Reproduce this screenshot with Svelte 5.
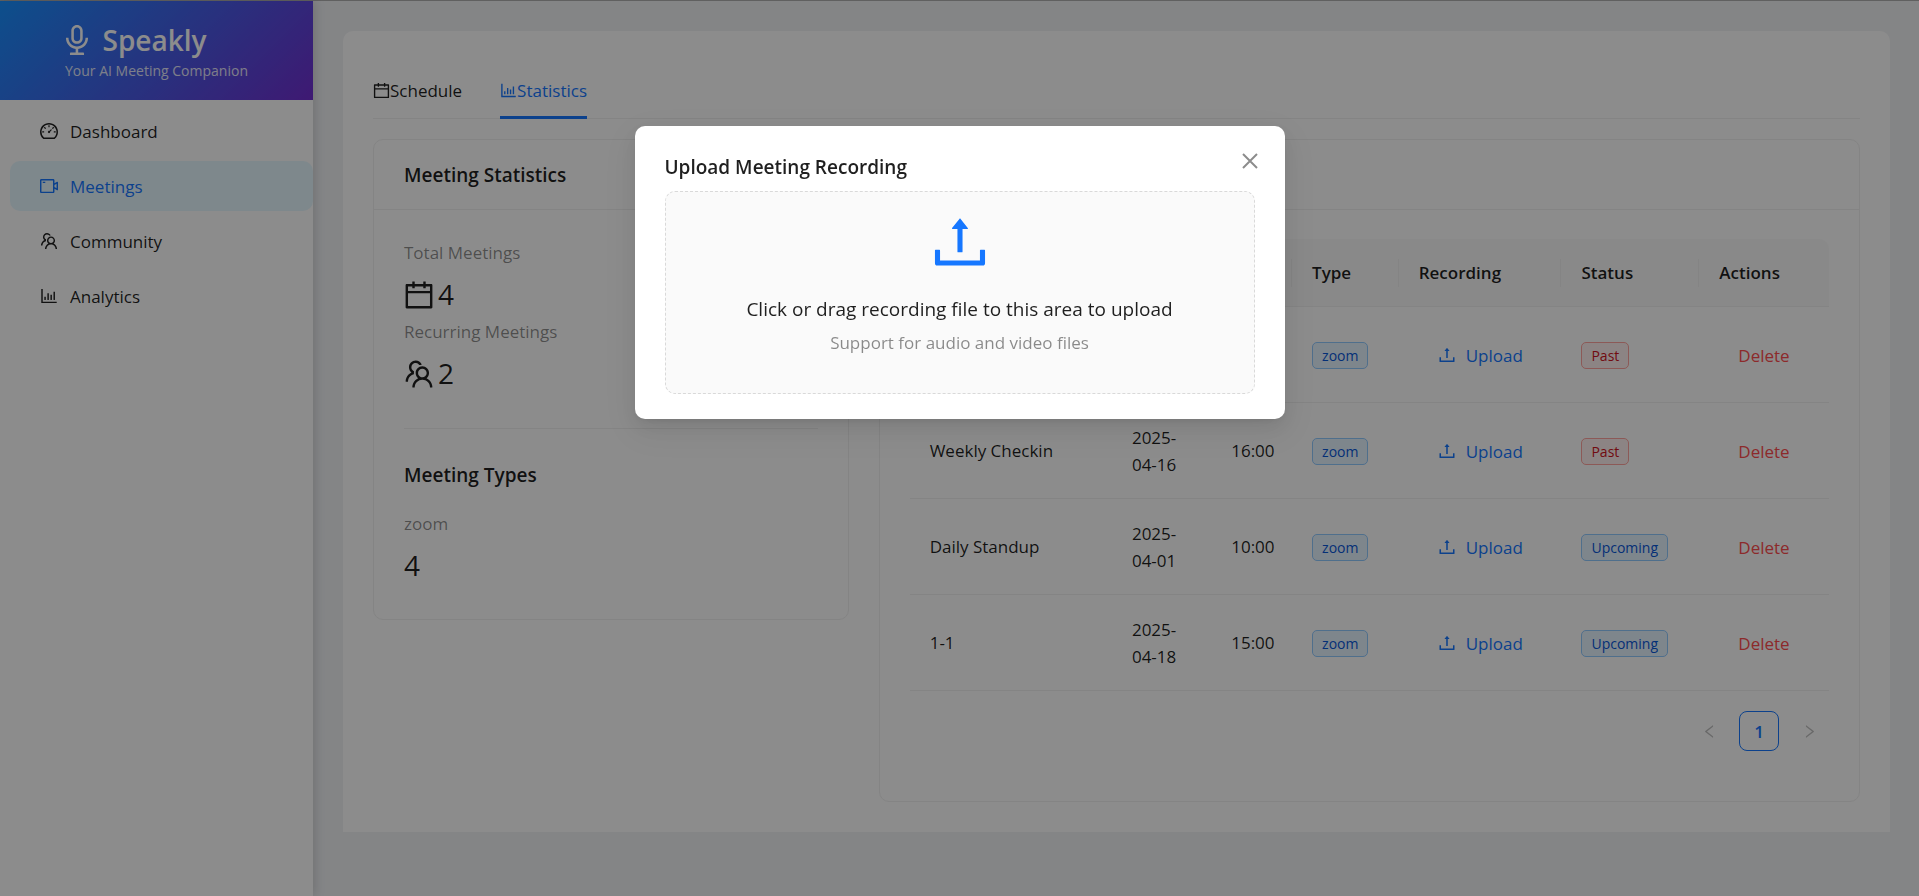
<script>
  const icons = {
    audio: 'M842 454c0-4.4-3.6-8-8-8h-60c-4.4 0-8 3.6-8 8 0 140.3-113.7 254-254 254S258 594.3 258 454c0-4.4-3.6-8-8-8h-60c-4.4 0-8 3.6-8 8 0 168.7 126.6 307.9 290 327.6V884H326.7c-13.7 0-24.7 14.3-24.7 32v36c0 4.4 2.8 8 6.2 8h407.6c3.4 0 6.2-3.6 6.2-8v-36c0-17.7-11-32-24.7-32H548V782.1c165.3-18 294-158 294-328.1zM512 624c93.9 0 170-75.2 170-168V232c0-92.8-76.1-168-170-168s-170 75.2-170 168v224c0 92.8 76.1 168 170 168zm-94-392c0-50.6 41.9-92 94-92s94 41.4 94 92v224c0 50.6-41.9 92-94 92s-94-41.4-94-92V232z',
    dashboard: 'M924.8 385.6a446.7 446.7 0 00-96-142.4 446.7 446.7 0 00-142.4-96C631.1 123.8 572.5 112 512 112s-119.1 11.8-174.4 35.2a446.7 446.7 0 00-142.4 96 446.7 446.7 0 00-96 142.4C75.8 440.9 64 499.5 64 560c0 132.7 58.3 257.7 159.9 343.1l1.7 1.4c5.8 4.8 13.1 7.5 20.6 7.5h531.7c7.5 0 14.8-2.7 20.6-7.5l1.7-1.4C901.7 817.7 960 692.7 960 560c0-60.5-11.9-119.1-35.2-174.4zM761.4 836H262.6A371.12 371.12 0 01140 560c0-99.4 38.7-192.8 109-263 70.3-70.3 163.7-109 263-109 99.4 0 192.8 38.7 263 109 70.3 70.3 109 163.7 109 263 0 105.6-44.5 205.5-122.6 276zM623.5 421.5a8.03 8.03 0 00-11.3 0L527.7 506c-18.7-5-39.4-.2-54.1 14.5a55.95 55.95 0 000 79.2 55.95 55.95 0 0079.2 0 55.87 55.87 0 0014.5-54.1l84.5-84.5c3.1-3.1 3.1-8.2 0-11.3l-28.3-28.3zM490 320h44c4.4 0 8-3.6 8-8v-80c0-4.4-3.6-8-8-8h-44c-4.4 0-8 3.6-8 8v80c0 4.4 3.6 8 8 8zm260 218v44c0 4.4 3.6 8 8 8h80c4.4 0 8-3.6 8-8v-44c0-4.4-3.6-8-8-8h-80c-4.4 0-8 3.6-8 8zm12.7-197.2l-31.1-31.1a8.03 8.03 0 00-11.3 0l-56.6 56.6a8.03 8.03 0 000 11.3l31.1 31.1c3.1 3.1 8.2 3.1 11.3 0l56.6-56.6c3.1-3.1 3.1-8.2 0-11.3zm-458.6-31.1a8.03 8.03 0 00-11.3 0l-31.1 31.1a8.03 8.03 0 000 11.3l56.6 56.6c3.1 3.1 8.2 3.1 11.3 0l31.1-31.1c3.1-3.1 3.1-8.2 0-11.3l-56.6-56.6zM262 530h-80c-4.4 0-8 3.6-8 8v44c0 4.4 3.6 8 8 8h80c4.4 0 8-3.6 8-8v-44c0-4.4-3.6-8-8-8z',
    video: 'M912 302.3L784 376V224c0-35.3-28.7-64-64-64H128c-35.3 0-64 28.7-64 64v576c0 35.3 28.7 64 64 64h592c35.3 0 64-28.7 64-64V648l128 73.7c21.3 12.3 48-3.1 48-27.6V330c0-24.6-26.7-40-48-27.7zM712 792H136V232h576v560zm176-167l-104-59.8V458.9L888 399v226zM208 360h112c4.4 0 8-3.6 8-8v-48c0-4.4-3.6-8-8-8H208c-4.4 0-8 3.6-8 8v48c0 4.4 3.6 8 8 8z',
    team: 'M824.2 699.9a301.55 301.55 0 00-86.4-60.4C783.1 602.8 812 546.8 812 484c0-110.8-92.4-201.7-203.2-200-109.1 1.7-197 90.6-197 200 0 62.8 29 118.8 74.2 155.5a300.95 300.95 0 00-86.4 60.4C345 754.6 314 826.8 312 903.8a8 8 0 008 8.2h56c4.3 0 7.9-3.4 8-7.7 1.9-58 25.4-112.3 66.7-153.5A226.62 226.62 0 01612 684c60.9 0 118.2 23.7 161.3 66.8C814.6 792 838 846.3 840 904.3c.1 4.3 3.7 7.7 8 7.7h56a8 8 0 008-8.2c-2-77-33-149.2-87.8-203.9zM612 612c-34.2 0-66.4-13.3-90.5-37.5a126.86 126.86 0 01-37.5-91.8c.3-32.8 13.4-64.5 36.3-88 24-24.6 56.1-38.3 90.4-38.7 33.9-.3 66.8 12.9 91 36.6 24.8 24.3 38.4 56.8 38.4 91.4 0 34.2-13.3 66.3-37.5 90.5A127.3 127.3 0 01612 612zM361.5 510.4c-.9-8.7-1.4-17.5-1.4-26.4 0-15.9 1.5-31.4 4.3-46.5.7-3.6-1.2-7.3-4.5-8.8-13.6-6.1-26.1-14.5-36.9-25.1a127.54 127.54 0 01-38.7-95.4c.9-32.1 13.8-62.6 36.3-85.6 24.7-25.3 57.9-39.1 93.2-38.7 31.9.3 62.7 12.6 86 34.4 7.9 7.4 14.7 15.6 20.4 24.4 2 3.1 5.9 4.4 9.3 3.2 17.6-6.1 36.2-10.4 55.3-12.4 5.6-.6 8.8-6.6 6.3-11.6-32.5-64.3-98.9-108.7-175.7-109.9-110.9-1.7-203.3 89.2-203.3 199.9 0 62.8 28.9 118.8 74.2 155.5-31.8 14.7-61.1 35-86.5 60.4-54.8 54.7-85.8 126.9-87.8 204a8 8 0 008 8.2h56.1c4.3 0 7.9-3.4 8-7.7 1.9-58 25.4-112.3 66.7-153.5 29.4-29.4 65.4-49.8 104.7-59.7 3.9-1 6.5-4.7 6-8.7z',
    chart: 'M888 792H200V168c0-4.4-3.6-8-8-8h-56c-4.4 0-8 3.6-8 8v688c0 4.4 3.6 8 8 8h752c4.4 0 8-3.6 8-8v-56c0-4.4-3.6-8-8-8zm-600-80h56c4.4 0 8-3.6 8-8V560c0-4.4-3.6-8-8-8h-56c-4.4 0-8 3.6-8 8v144c0 4.4 3.6 8 8 8zm152 0h56c4.4 0 8-3.6 8-8V384c0-4.4-3.6-8-8-8h-56c-4.4 0-8 3.6-8 8v320c0 4.4 3.6 8 8 8zm152 0h56c4.4 0 8-3.6 8-8V462c0-4.4-3.6-8-8-8h-56c-4.4 0-8 3.6-8 8v242c0 4.4 3.6 8 8 8zm152 0h56c4.4 0 8-3.6 8-8V304c0-4.4-3.6-8-8-8h-56c-4.4 0-8 3.6-8 8v400c0 4.4 3.6 8 8 8z',
    calendar: 'M880 184H712v-64c0-4.4-3.6-8-8-8h-56c-4.4 0-8 3.6-8 8v64H384v-64c0-4.4-3.6-8-8-8h-56c-4.4 0-8 3.6-8 8v64H144c-17.7 0-32 14.3-32 32v664c0 17.7 14.3 32 32 32h736c17.7 0 32-14.3 32-32V216c0-17.7-14.3-32-32-32zm-40 656H184V460h656v380zM184 392V256h128v48c0 4.4 3.6 8 8 8h56c4.4 0 8-3.6 8-8v-48h256v48c0 4.4 3.6 8 8 8h56c4.4 0 8-3.6 8-8v-48h128v136H184z',
    upload: 'M400 317.7h73.9V656c0 4.4 3.6 8 8 8h60c4.4 0 8-3.6 8-8V317.7H624c6.7 0 10.4-7.7 6.3-12.9L518.3 163a8 8 0 00-12.6 0l-112 141.7c-4.1 5.3-.4 13 6.3 13zM878 626h-60c-4.4 0-8 3.6-8 8v154H214V634c0-4.4-3.6-8-8-8h-60c-4.4 0-8 3.6-8 8v198c0 17.7 14.3 32 32 32h684c17.7 0 32-14.3 32-32V634c0-4.4-3.6-8-8-8z',
    left: 'M724 218.3V141c0-6.7-7.7-10.4-12.9-6.3L260.3 486.8a31.86 31.86 0 000 50.3l450.8 352.1c5.3 4.1 12.9.4 12.9-6.3v-77.3c0-4.9-2.3-9.6-6.1-12.6l-360-281 360-281.1c3.8-3 6.1-7.7 6.1-12.6z',
    right: 'M300 218.3V141c0-6.7 7.7-10.4 12.9-6.3l450.8 352.1a31.86 31.86 0 010 50.3L312.9 889.2c-5.3 4.1-12.9.4-12.9-6.3v-77.3c0-4.9 2.3-9.6 6.1-12.6l360-281-360-281.1c-3.8-3-6.1-7.7-6.1-12.6z'
  };

  const menu = [
    { label: 'Dashboard', icon: 'dashboard' },
    { label: 'Meetings', icon: 'video', active: true },
    { label: 'Community', icon: 'team' },
    { label: 'Analytics', icon: 'chart' }
  ];

  const meetings = [
    { title: 'Team Sync', date: ['2025-', '04-14'], time: '09:00', type: 'zoom', status: 'Past' },
    { title: 'Weekly Checkin', date: ['2025-', '04-16'], time: '16:00', type: 'zoom', status: 'Past' },
    { title: 'Daily Standup', date: ['2025-', '04-01'], time: '10:00', type: 'zoom', status: 'Upcoming' },
    { title: '1-1', date: ['2025-', '04-18'], time: '15:00', type: 'zoom', status: 'Upcoming' }
  ];

  let open = $state(true);
</script>

{#snippet icon(name)}
  <svg class="icon" viewBox="64 64 896 896" aria-hidden="true"><path d={icons[name]} /></svg>
{/snippet}

<div class="app">
  <aside class="sider">
    <div class="brand">
      <div class="logo">{@render icon('audio')}<span>Speakly</span></div>
      <div class="tagline">Your AI Meeting Companion</div>
    </div>
    <nav class="menu">
      {#each menu as item}
        <a href="#{item.label.toLowerCase()}" class:active={item.active}>
          {@render icon(item.icon)}<span>{item.label}</span>
        </a>
      {/each}
    </nav>
  </aside>

  <main class="content">
    <section class="panel">
      <div class="tabs" role="tablist">
        <button class="tab" role="tab" aria-selected="false">{@render icon('calendar')}Schedule</button>
        <button class="tab selected" role="tab" aria-selected="true">{@render icon('chart')}Statistics</button>
      </div>

      <div class="columns">
        <article class="card stats">
          <h2 class="card-head">Meeting Statistics</h2>
          <div class="card-body">
            <div class="stat">
              <div class="stat-label">Total Meetings</div>
              <div class="stat-value">{@render icon('calendar')}4</div>
            </div>
            <div class="stat">
              <div class="stat-label">Recurring Meetings</div>
              <div class="stat-value">{@render icon('team')}2</div>
            </div>
            <hr />
            <h3>Meeting Types</h3>
            <div class="stat">
              <div class="stat-label">zoom</div>
              <div class="stat-value">4</div>
            </div>
          </div>
        </article>

        <article class="card list">
          <h2 class="card-head">Meetings</h2>
          <div class="card-body">
            <table>
              <colgroup>
                <col class="c-title" /><col class="c-date" /><col class="c-time" /><col class="c-type" />
                <col class="c-rec" /><col class="c-status" /><col class="c-actions" />
              </colgroup>
              <thead>
                <tr>
                  <th>Title</th><th>Date</th><th>Time</th><th>Type</th>
                  <th>Recording</th><th>Status</th><th>Actions</th>
                </tr>
              </thead>
              <tbody>
                {#each meetings as m}
                  <tr>
                    <td>{m.title}</td>
                    <td>{m.date[0]}<wbr />{m.date[1]}</td>
                    <td>{m.time}</td>
                    <td><span class="tag blue">{m.type}</span></td>
                    <td><button class="link" onclick={() => (open = true)}>{@render icon('upload')}Upload</button></td>
                    <td><span class="tag" class:blue={m.status === 'Upcoming'} class:red={m.status === 'Past'}>{m.status}</span></td>
                    <td><button class="link danger">Delete</button></td>
                  </tr>
                {/each}
              </tbody>
            </table>
            <div class="pagination">
              <button class="arrow" disabled aria-label="Previous page">{@render icon('left')}</button>
              <button class="page">1</button>
              <button class="arrow" disabled aria-label="Next page">{@render icon('right')}</button>
            </div>
          </div>
        </article>
      </div>
    </section>
  </main>
</div>

{#if open}
  <div class="mask">
    <div class="modal" role="dialog" aria-modal="true" aria-labelledby="upload-title">
      <button class="close" aria-label="Close" onclick={() => (open = false)}>
        <svg viewBox="0 0 16 16" aria-hidden="true"><path d="M1 1L15 15M15 1L1 15" /></svg>
      </button>
      <h2 id="upload-title">Upload Meeting Recording</h2>
      <label class="drop">
        <input type="file" accept="audio/*,video/*" />
        {@render icon('upload')}
        <span class="drop-text">Click or drag recording file to this area to upload</span>
        <span class="drop-hint">Support for audio and video files</span>
      </label>
    </div>
  </div>
{/if}

<style>
  :global(body) {
    margin: 0;
    background: #f0f2f5;
    color: rgba(0, 0, 0, 0.88);
    font-family: "Segoe UI", "Open Sans", "Noto Sans", sans-serif;
    font-size: 17px;
    line-height: 27px;
  }
  * { box-sizing: border-box; }
  h2, h3 { margin: 0; font-size: 19px; font-weight: 600; line-height: 30px; }
  button { font: inherit; color: inherit; background: none; border: 0; padding: 0; cursor: pointer; }
  .icon { width: 18px; height: 18px; fill: currentColor; flex: none; display: block; }

  .app { display: flex; min-height: 100vh; border-top: 1px solid #b0b0b0; }

  .sider {
    flex: 0 0 313px;
    background: #fff;
    box-shadow: 2px 0 10px rgba(0, 0, 0, 0.15);
    z-index: 1;
  }
  .brand {
    height: 99px;
    padding-top: 20px;
    background: linear-gradient(135deg, #1890ff, #722ed1);
    color: #fff;
    text-align: center;
  }
  .logo {
    display: flex;
    justify-content: center;
    align-items: center;
    gap: 10px;
    padding-right: 44px;
    font-size: 28px;
    font-weight: 600;
    line-height: 38px;
  }
  .logo .icon { width: 30px; height: 30px; }
  .tagline { font-size: 14px; line-height: 24px; opacity: 0.85; }
  .menu { display: flex; flex-direction: column; gap: 5px; padding-top: 6px; }
  .menu a {
    display: flex;
    align-items: center;
    gap: 12px;
    height: 50px;
    margin-left: 10px;
    padding-left: 30px;
    border-radius: 10px;
    color: inherit;
    text-decoration: none;
  }
  .menu a.active { background: #e6f7ff; color: #1677ff; }

  .content { flex: 1; min-width: 0; padding: 30px 29px 30px 30px; }
  .panel { background: #fff; border-radius: 10px 10px 0 0; padding: 30px; }

  .tabs {
    display: flex;
    gap: 38px;
    margin-bottom: 20px;
    border-bottom: 1px solid #f0f0f0;
  }
  .tab {
    display: flex;
    align-items: center;
    height: 58px;
    margin-bottom: -1px;
    padding-top: 4px;
    border-bottom: 3px solid transparent;
  }
  .tab .icon { width: 17px; height: 17px; }
  .tab.selected { color: #1677ff; border-bottom-color: #1677ff; }

  .columns { display: flex; gap: 30px; align-items: flex-start; }
  .card { border: 1px solid #f0f0f0; border-radius: 10px; }
  .card-head { padding: 20px 30px 19px; border-bottom: 1px solid #f0f0f0; }
  .stats { flex: 0 0 calc((100% + 30px) / 3 - 30px); }
  .list { flex: 1; min-width: 0; }
  .card-body { padding: 29px 30px 30px; }

  .stat { display: flex; flex-direction: column; align-items: flex-start; }
  .stat-label { color: rgba(0, 0, 0, 0.45); margin-bottom: 5px; }
  .stat-value {
    display: flex;
    align-items: center;
    gap: 4px;
    font-size: 28px;
    line-height: 47px;
  }
  .stat-value .icon { width: 30px; height: 30px; }
  hr { height: 1px; margin: 31px 0; border: 0; background: #f0f0f0; }
  h3 { margin-bottom: 20px; }

  table { width: 100%; table-layout: fixed; border-collapse: separate; border-spacing: 0; }
  .c-title { width: 22%; }
  .c-date { width: 11%; }
  .c-time { width: 9%; }
  .c-type { width: 11%; }
  .c-rec { width: 18%; }
  .c-status { width: 15%; }
  .c-actions { width: 14%; }
  th, td { padding: 20px; text-align: left; border-bottom: 1px solid #f0f0f0; }
  .c-date { width: 10.8%; }
  .c-time { width: 8.8%; }
  .c-type { width: 11.6%; }
  .c-rec { width: 17.7%; }
  .c-actions { width: 14.1%; }
  th {
    font-weight: 600;
    background: linear-gradient(#f0f0f0, #f0f0f0) right center / 1px 28px no-repeat, #fafafa;
  }
  th:first-child { border-top-left-radius: 10px; }
  th:last-child { border-top-right-radius: 10px; background: #fafafa; }
  td { height: 96px; }
  tbody td { padding-top: 0; padding-bottom: 0; }

  .tag {
    display: inline-block;
    padding: 0 9px;
    border: 1px solid;
    border-radius: 5px;
    font-size: 14px;
    line-height: 25px;
    vertical-align: middle;
  }
  .blue { color: #0958d9; background: #e6f4ff; border-color: #91caff; }
  .red { color: #cf1322; background: #fff1f0; border-color: #ffa39e; }
  .link { display: inline-flex; align-items: center; gap: 10px; padding: 0 19px; color: #1677ff; vertical-align: middle; }
  .danger { color: #ff4d4f; }

  .pagination { display: flex; justify-content: flex-end; gap: 10px; margin: 20px 0; }
  .pagination button { display: grid; place-items: center; width: 40px; height: 40px; border-radius: 8px; }
  .pagination .page { border: 1px solid #1677ff; color: #1677ff; font-weight: 600; }
  .arrow { color: rgba(0, 0, 0, 0.25); }
  .pagination .icon { width: 15px; height: 15px; }

  .mask {
    position: fixed;
    inset: 0;
    z-index: 10;
    padding: 126px 20px 0;
    background: rgba(0, 0, 0, 0.45);
  }
  .modal {
    position: relative;
    max-width: 650px;
    margin: 0 auto;
    padding: 26px 30px 25px;
    border-radius: 10px;
    background: #fff;
    box-shadow: 0 8px 20px rgba(0, 0, 0, 0.08), 0 4px 8px -5px rgba(0, 0, 0, 0.12), 0 11px 35px 10px rgba(0, 0, 0, 0.05);
  }
  .modal h2 { margin-bottom: 9px; }
  .close {
    position: absolute;
    top: 15px;
    right: 15px;
    display: grid;
    place-items: center;
    width: 40px;
    height: 40px;
    color: rgba(0, 0, 0, 0.45);
  }
  .close svg { width: 16px; height: 16px; fill: none; stroke: currentColor; stroke-width: 2; }
  .drop {
    display: flex;
    flex-direction: column;
    align-items: center;
    padding: 20px 20px 36px;
    border: 1px dashed #d9d9d9;
    border-radius: 10px;
    background: #fafafa;
    cursor: pointer;
  }
  .drop input { display: none; }
  .drop .icon { width: 60px; height: 60px; margin-bottom: 22px; color: #1677ff; }
  .drop-text { margin-bottom: 5px; font-size: 19px; line-height: 30px; }
  .drop-hint { color: rgba(0, 0, 0, 0.45); line-height: 28px; }
</style>
